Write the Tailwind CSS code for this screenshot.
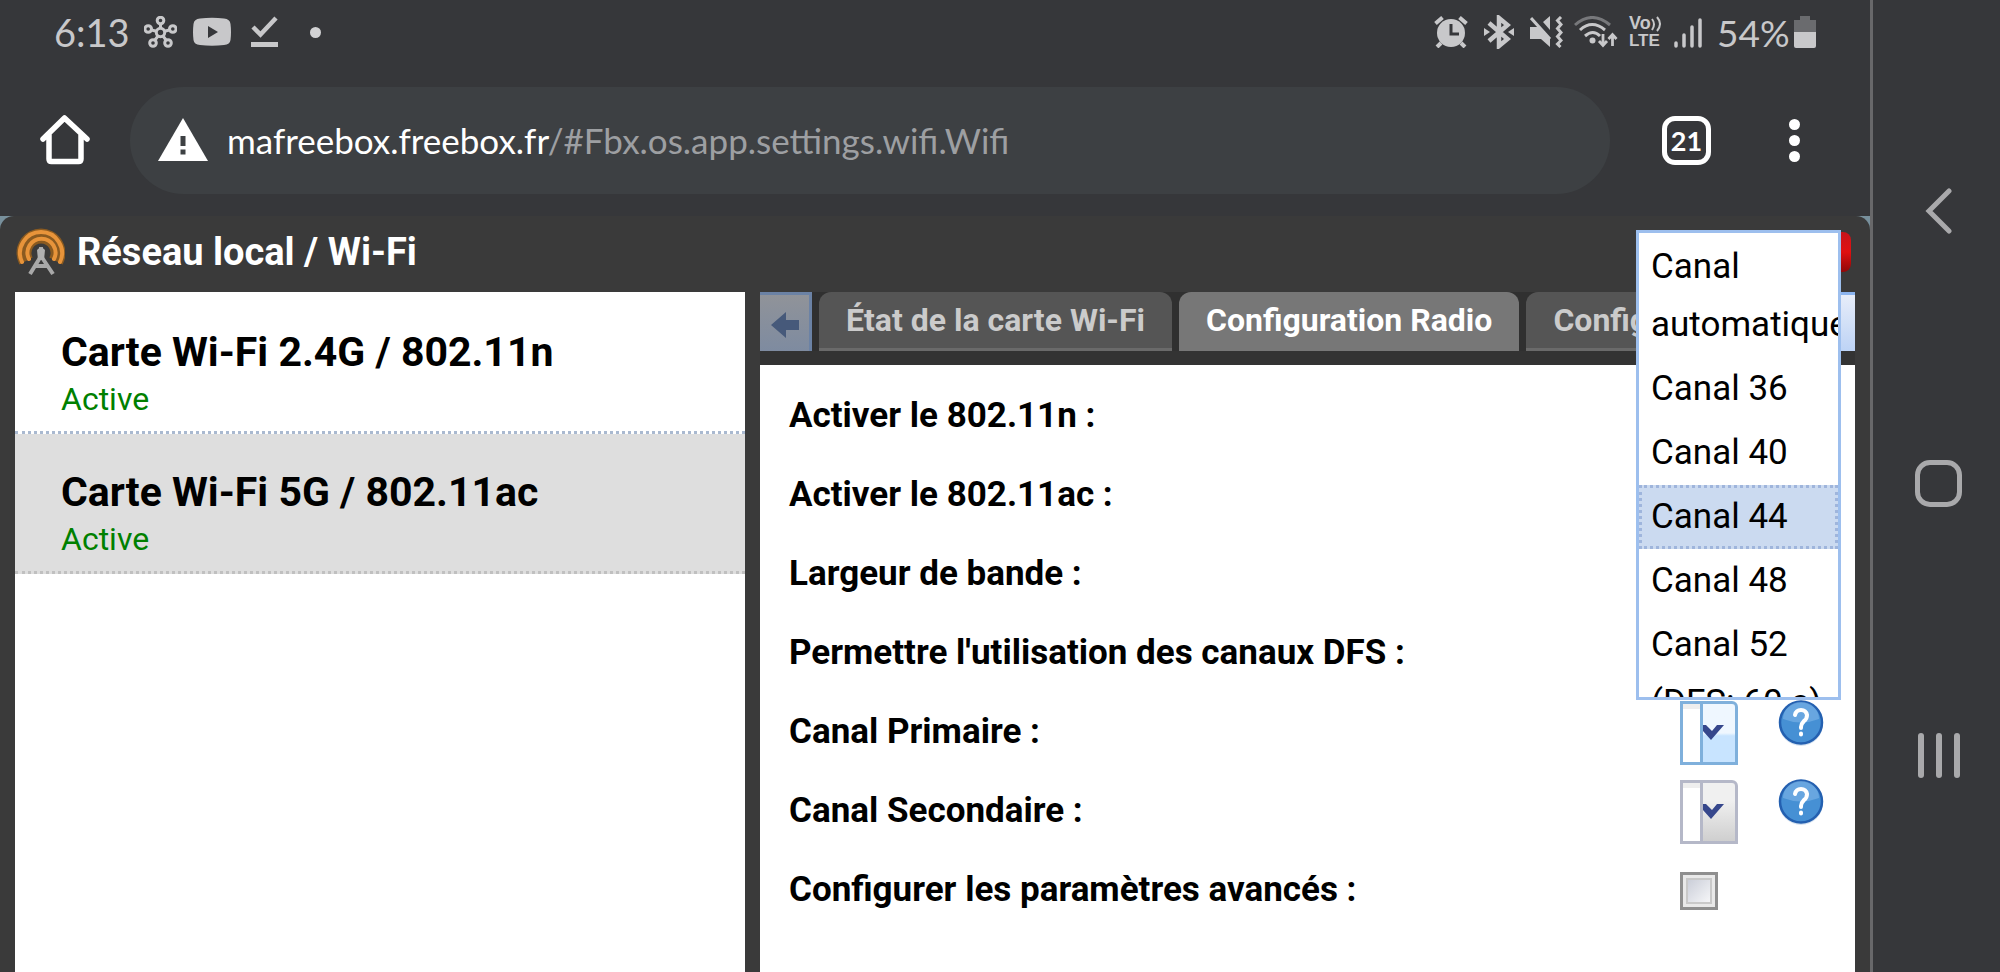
<!DOCTYPE html>
<html lang="fr">
<head>
<meta charset="utf-8">
<meta name="viewport" content="width=device-width, initial-scale=1">
<title>Réseau local / Wi-Fi</title>
<script src="https://cdn.jsdelivr.net/npm/@tailwindcss/browser@4"></script>
</head>
<body class="flex h-screen overflow-hidden bg-[#36373a] font-['Roboto',sans-serif]">
<div class="flex min-w-0 flex-1 flex-col">

  <!-- Status bar -->
  <div class="flex h-16 shrink-0 items-center pr-[54px] pl-[54px] font-['Lato',sans-serif] text-[#c8c8ca]">
    <span class="w-[90px] text-[38px] leading-none">6:13</span>
    <svg class="h-8 w-[33px]" viewBox="0 0 33 32" fill="none" stroke="currentColor" stroke-width="3"><circle cx="16.500" cy="16.500" r="4.200"/><circle cx="16.500" cy="4.500" r="3.300"/><circle cx="28.800" cy="13" r="3.300"/><circle cx="24" cy="27" r="3.300"/><circle cx="9" cy="27" r="3.300"/><circle cx="4.200" cy="13" r="3.300"/><path d="M16.500 8v4M25.500 14l-5 1.300M22 24l-3-4M11 24l3-4M7.500 14l5 1.300"/></svg>
    <svg class="ml-4 h-8 w-[38px]" viewBox="0 0 38 32"><path fill="currentColor" fill-rule="evenodd" d="M7 2.500Q19 1 31 2.500q6 .5 6.500 5.500 1 8 0 16-.5 4.500-6.500 5-12 1.300-24 0-6-.5-6.500-5-1-8 0-16Q1 3 7 2.500zM15 10v12l10-6z"/></svg>
    <svg class="ml-5 h-8 w-[27px]" viewBox="0 0 27 32" fill="none" stroke="currentColor"><path stroke-width="4.500" d="M2 11l7.500 7.500L25 2"/><path stroke-width="5" d="M0 28.500h27"/></svg>
    <span class="ml-8 size-[11px] rounded-full bg-[#d2d2d4]"></span>

    <div class="ml-auto flex items-center">
      <svg class="h-8 w-[34px]" viewBox="0 0 34 32" fill="none" stroke="currentColor"><circle cx="17" cy="17" r="14" fill="currentColor" stroke="none"/><path stroke-width="4" d="M1.500 7.500l7-6M32.500 7.500l-7-6M7 27l-4 4M27 27l4 4"/><path stroke="#36373a" stroke-width="3" d="M17 8v10h8"/></svg>
      <svg class="ml-4 h-[34px] w-[30px]" viewBox="0 0 30 34" fill="none" stroke="currentColor" stroke-width="4.500"><path d="M5 8l18.500 16-8.500 7V3l8.500 7L5 26"/><path fill="currentColor" stroke="none" d="M0 13l6 4-6 4zM30 13l-6 4 6 4z"/></svg>
      <svg class="ml-4 h-8 w-[33px]" viewBox="0 0 33 32" fill="currentColor"><path d="M0 11h9l11 12v8l-9-8H0zM20 0v14l-7-8z"/><path fill="none" stroke="currentColor" stroke-width="3" d="M1 2l19 21M31 1l-3.500 3.500 3.500 4-3.500 4 3.500 4-3.500 4 3.500 4-3.500 3.500 3 3"/></svg>
      <svg class="ml-[11px] h-8 w-[44px]" viewBox="0 0 44 32" fill="none" stroke="currentColor" stroke-width="3"><path stroke="#77787b" d="M1 9Q18-6 36 9"/><path d="M6 14q12-11 25 0M11 20q8-7 15 0"/><circle cx="18.500" cy="24.500" r="3" fill="currentColor" stroke="none"/><path stroke-width="2.800" d="M29 18v11M25 25l4 4.500 4-4.500M38.500 30V19M34.500 23l4-4.500 4 4.500"/></svg>
      <div class="ml-[11px] flex w-[34px] flex-col font-['Liberation_Sans',sans-serif] text-[18px] leading-[17px] font-bold">
        <span class="flex items-center">Vo<svg class="h-4 w-[11px] shrink-0" viewBox="0 0 11 16" fill="none" stroke="currentColor" stroke-width="2"><path d="M1 3q4 5 0 11M6 1q6 7 0 14"/></svg></span>
        <span class="text-[17px]">LTE</span>
      </div>
      <svg class="ml-[11px] h-8 w-7" viewBox="0 0 28 32" stroke="currentColor" stroke-width="3.500" stroke-linecap="round"><path d="M2 27v3M10 19v11M18 11v19M26 4v26"/></svg>
      <span class="ml-[15px] w-[77px] text-[37px] leading-none">54%</span>
      <svg class="h-8 w-[22px]" viewBox="0 0 22 32"><path fill="#6a6b6e" d="M6 0h10v4h6v14H0V4h6z"/><path fill="currentColor" d="M0 16h22v14q0 2-2 2H2q-2 0-2-2z"/></svg>
    </div>
  </div>

  <!-- Browser toolbar -->
  <header class="flex h-[152px] shrink-0 items-center pr-[60px] pl-10 text-white">
    <button type="button" aria-label="Accueil"><svg class="size-[50px]" viewBox="0 0 50 50" fill="none" stroke="currentColor" stroke-width="5.500" stroke-linecap="round" stroke-linejoin="round"><path d="M3 24L24.500 3 47 24M9 20v24q0 2.500 2.500 2.500h27q2.500 0 2.500-2.500V20"/></svg></button>
    <form class="ml-10 flex h-[107px] min-w-0 flex-1 items-center rounded-full bg-[#3d4043] pl-7">
      <svg class="h-11 w-[50px] shrink-0" viewBox="0 0 50 44"><path fill="currentColor" d="M25 0l25 43H0z"/><path stroke="#3d4043" stroke-width="5" d="M25 18v10M25 31.500v5"/></svg>
      <a href="#Fbx.os.app.settings.wifi.Wifi" class="ml-[19px] font-['Lato',sans-serif] text-[35px] whitespace-nowrap text-[#9d9fa2]"><span class="text-white">mafreebox.freebox.fr</span>/#Fbx.os.app.settings.wifi.Wifi</a>
    </form>
    <button type="button" aria-label="Onglets ouverts" class="ml-[52px] flex size-[49px] items-center justify-center rounded-[13px] border-[5px] border-white font-['Lato',sans-serif] text-[27px] leading-none font-bold">21</button>
    <button type="button" aria-label="Menu" class="ml-[67px] flex w-8 flex-col items-center gap-[5px]"><span class="size-[11px] rounded-full bg-white"></span><span class="size-[11px] rounded-full bg-white"></span><span class="size-[11px] rounded-full bg-white"></span></button>
  </header>

  <!-- Settings window -->
  <div class="flex min-h-0 flex-1 bg-[#78909c]">
  <main class="relative flex min-w-0 flex-1 flex-col rounded-t-[14px] bg-[#3a3a3a] px-[15px]">
    <div class="flex h-[76px] shrink-0 items-center gap-3 pb-1">
      <svg class="h-12 w-[50px]" viewBox="0 0 50 48" fill="none"><path stroke="#8a5a20" stroke-width="15" d="M11 33a17 17 0 1 1 30 0"/><path stroke="#e8943a" stroke-width="4" stroke-linecap="round" d="M7 34a21 21 0 1 1 38 0"/><path stroke="#e8943a" stroke-width="4" stroke-linecap="round" d="M14 31a14 14 0 1 1 25 0"/><path stroke="#a8a8a8" stroke-width="4" d="M26 19v12M26 28L15 46M26 28l12 18M21 38h11"/><path fill="#b0b0b0" d="M22 22q4-5 8 0l-1 10h-6z"/></svg>
      <h1 class="text-[38px] leading-none font-bold text-white">Réseau local / Wi-Fi</h1>
      <button type="button" aria-label="Fermer" class="ml-auto mr-[4px] h-10 w-11 rounded-lg bg-linear-to-b from-[#c8141a] via-[#e01010] to-[#900808]"></button>
    </div>

    <div class="flex min-h-0 flex-1 gap-[15px]">
      <nav aria-label="Cartes Wi-Fi" class="w-2/5 max-w-[730px] shrink-0 bg-white">
        <a href="#wifi-24" class="flex h-[142px] flex-col border-b-3 border-dotted border-[#a9b9d0] pt-9 pl-[46px]">
          <span class="text-[41px] leading-[48px] font-bold">Carte Wi-Fi 2.4G / 802.11n</span>
          <span class="text-[32px] leading-[46px] text-[#008000]">Active</span>
        </a>
        <a href="#wifi-5" aria-current="true" class="flex h-[140px] flex-col border-b-3 border-dotted border-[#c0c0c0] bg-[#dedede] pt-[34px] pl-[46px]">
          <span class="text-[41px] leading-[48px] font-bold">Carte Wi-Fi 5G / 802.11ac</span>
          <span class="text-[32px] leading-[46px] text-[#008000]">Active</span>
        </a>
      </nav>

      <section class="flex min-w-0 flex-1 flex-col">
        <div class="flex h-[59px] shrink-0 gap-[7px] bg-[#303030] text-[32px] leading-[56px] font-bold whitespace-nowrap text-[#cbcbcb]">
          <button type="button" aria-label="Onglets précédents" class="flex w-[52px] shrink-0 items-center justify-center border-t-3 border-r-3 border-[#6b82a5] bg-linear-to-b from-[#909399] to-[#7e8ba0] text-[#46597a]"><svg class="mt-1 size-7" viewBox="0 0 28 28" fill="currentColor"><path d="M0 14L15 1v8h13v10H15v8z"/></svg></button>
          <button type="button" class="rounded-t-xl border-b-3 border-[#6a6a6a] bg-[#555] px-[27px] text-left">État de la carte Wi-Fi</button>
          <button type="button" class="rounded-t-xl border-b-3 border-[#777] bg-[#777] px-[27px] text-left text-white">Configuration Radio</button>
          <button type="button" class="min-w-0 flex-1 overflow-hidden rounded-tl-xl border-b-3 border-[#6a6a6a] bg-[#555] px-[27px] text-left">Configuration Wi-Fi</button>
          <button type="button" aria-label="Onglets suivants" class="w-[52px] shrink-0 border-t-3 border-[#8bb4ef] bg-linear-to-b from-[#e7edf9] to-[#bdd3f5]"></button>
        </div>
        <div class="h-[14px] shrink-0 bg-[#333]"></div>

        <form class="flex flex-1 flex-col overflow-hidden bg-white pt-3 pl-[29px] text-[35px] font-bold text-black">
          <div class="flex h-[79px] shrink-0 items-center">Activer le 802.11n :</div>
          <div class="flex h-[79px] shrink-0 items-center">Activer le 802.11ac :</div>
          <div class="flex h-[79px] shrink-0 items-center">Largeur de bande :</div>
          <div class="flex h-[79px] shrink-0 items-center">Permettre l'utilisation des canaux DFS :</div>
          <div class="flex h-[79px] shrink-0 items-center pr-[31px]">
            <label for="primaire">Canal Primaire :</label>
            <div class="relative ml-auto h-16 w-[58px]">
              <select id="primaire" class="size-full appearance-none rounded-tr-md border-3 border-[#7fb0dc] bg-linear-to-b from-[#eff7ff] from-50% to-[#c8e4ff] to-55% text-transparent"><option>Canal 44</option></select>
              <svg class="pointer-events-none absolute inset-0 size-full" viewBox="0 0 58 64"><path fill="#fff" d="M3 3h18v58H3z"/><path fill="#eee" d="M3 3h18v5H3z"/><path fill="#7fb0dc" d="M20 3h3v58h-3z"/><path fill="#36478c" d="M23 24h3l6 6 5-6h7L31 39l-8-9z"/></svg>
            </div>
            <button type="button" aria-label="Aide canal primaire" class="mb-5 ml-10"><svg class="size-[46px]" viewBox="0 0 46 46"><circle cx="23" cy="24" r="22" fill="#d5e2f0"/><circle cx="23" cy="22.500" r="21" fill="#4690d4" stroke="#2460b0" stroke-width="2.500"/><path fill="#7eb6e8" d="M5 19a18 17 0 0 1 36 0q-18 7-36 0z" opacity=".6"/><path fill="none" stroke="#fff" stroke-width="4" stroke-linecap="round" d="M17 15q1-5 6-5t6 5q0 4-3 6-3 3-3 6v1M23 33.500v1"/></svg></button>
          </div>
          <div class="flex h-[79px] shrink-0 items-center pr-[31px]">
            <label for="secondaire">Canal Secondaire :</label>
            <div class="relative ml-auto h-16 w-[58px]">
              <select id="secondaire" class="size-full appearance-none rounded-tr-md border-3 border-[#b5b8c8] bg-linear-to-b from-[#f0f0f0] from-30% to-[#cfcfcf] text-transparent"><option>Canal 48</option></select>
              <svg class="pointer-events-none absolute inset-0 size-full" viewBox="0 0 58 64"><path fill="#fff" d="M3 3h18v58H3z"/><path fill="#eee" d="M3 3h18v5H3z"/><path fill="#b5b8c8" d="M20 3h3v58h-3z"/><path fill="#36478c" d="M23 24h3l6 6 5-6h7L31 39l-8-9z"/></svg>
            </div>
            <button type="button" aria-label="Aide canal secondaire" class="mb-5 ml-10"><svg class="size-[46px]" viewBox="0 0 46 46"><circle cx="23" cy="24" r="22" fill="#d5e2f0"/><circle cx="23" cy="22.500" r="21" fill="#4690d4" stroke="#2460b0" stroke-width="2.500"/><path fill="#7eb6e8" d="M5 19a18 17 0 0 1 36 0q-18 7-36 0z" opacity=".6"/><path fill="none" stroke="#fff" stroke-width="4" stroke-linecap="round" d="M17 15q1-5 6-5t6 5q0 4-3 6-3 3-3 6v1M23 33.500v1"/></svg></button>
          </div>
          <div class="flex h-[79px] shrink-0 items-center pr-[137px]">
            <label for="avances">Configurer les paramètres avancés :</label>
            <input id="avances" type="checkbox" class="ml-auto size-[38px] appearance-none border-3 border-[#8f8f8f] bg-linear-to-br from-[#c2c6d2] to-white shadow-[inset_0_0_0_3px_#e9e9e9,inset_0_0_0_5px_#c9c9c9]">
          </div>
        </form>
      </section>
    </div>

    <!-- Open channel list -->
    <ul role="listbox" aria-label="Canal primaire" class="absolute top-[14px] right-[29px] h-[470px] w-[205px] overflow-hidden border-3 border-[#9dbfee] bg-white pt-0.5 text-[35px] leading-[58px] text-black">
      <li role="option" class="border-3 border-transparent px-[9px]">Canal automatique</li>
      <li role="option" class="border-3 border-transparent px-[9px]">Canal 36</li>
      <li role="option" class="border-3 border-transparent px-[9px]">Canal 40</li>
      <li role="option" aria-selected="true" class="border-3 border-dotted border-[#9fb5dc] bg-[#cbdaf0] px-[9px]">Canal 44</li>
      <li role="option" class="border-3 border-transparent px-[9px]">Canal 48</li>
      <li role="option" class="border-3 border-transparent px-[9px]">Canal 52 (DFS: 60 s)</li>
    </ul>
  </main>
  </div>
</div>

<!-- System navigation -->
<nav aria-label="Navigation système" class="flex w-[130px] shrink-0 flex-col items-center justify-center gap-[226px] border-l-3 border-[#68686a] bg-[#36373a] pb-1.5 pl-1 text-[#a9a9ab]">
  <button type="button" aria-label="Retour"><svg class="h-[46px] w-7" viewBox="0 0 28 46" fill="none" stroke="currentColor" stroke-width="5" stroke-linecap="round"><path d="M24 3L4 23l20 20"/></svg></button>
  <button type="button" aria-label="Écran d'accueil" class="size-[47px] rounded-[15px] border-[5px] border-current"></button>
  <button type="button" aria-label="Applications récentes" class="flex h-[45px] gap-3"><span class="w-[6px] rounded-full bg-current"></span><span class="w-[6px] rounded-full bg-current"></span><span class="w-[6px] rounded-full bg-current"></span></button>
</nav>
</body>
</html>
